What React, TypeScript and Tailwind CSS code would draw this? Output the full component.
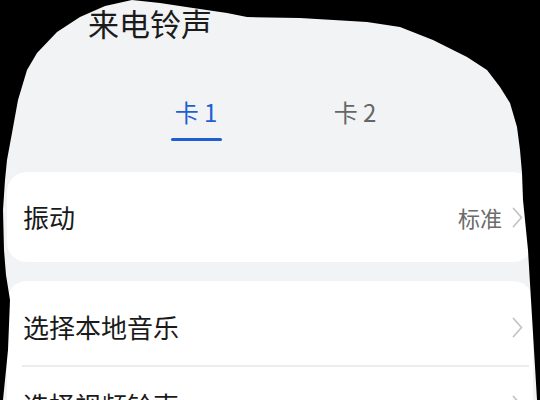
import React from "react";

const font = { fontFamily: '"Noto Sans CJK SC", "Noto Sans", sans-serif' };

function Chevron() {
  return (
    <svg width="11" height="21" viewBox="0 0 11 21" className="shrink-0">
      <polyline
        points="1.5,1.5 9.5,10.5 1.5,19.5"
        fill="none"
        stroke="#c4c4c4"
        strokeWidth="1.8"
        strokeLinecap="round"
        strokeLinejoin="round"
      />
    </svg>
  );
}

// irregular black crop drawn over the screenshot
const inner =
  "M3,400 L8,350 L10,300 L6,275 L4,250 L3,210 L5,180 L7,160 L12,133 L18,100 L27,70 L37,53 L57,32 L80,17 L105,6 L132,0 L160,3 L193,8 L227,13 L247,17 L300,18 L367,22 L400,27 L433,40 L467,57 L487,70 L500,87 L510,103 L517,127 L520,150 L522,173 L523,200 L528,250 L531,300 L534,350 L537,400 Z";

export default function App() {
  return (
    <div
      className="relative w-[540px] h-[400px] overflow-hidden bg-[#f1f3f5]"
      style={font}
    >
      {/* Title */}
      <div className="pt-[3px] pl-[88px] h-[43px] text-[31px] leading-[40px] text-[#1b1b1b]">
        来电铃声
      </div>

      {/* Tabs */}
      <div className="mt-[53px] ml-[136px] flex gap-[39px]">
        <div className="w-[120px] flex flex-col items-center">
          <span className="text-[24px] leading-[32px] text-[#1f5fd1]">卡 1</span>
          <div className="mt-[10px] w-[51px] h-[3px] rounded-full bg-[#1f5fd1]" />
        </div>
        <div className="w-[120px] flex flex-col items-center">
          <span className="text-[24px] leading-[32px] text-[#666666]">卡 2</span>
        </div>
      </div>

      {/* Vibration card */}
      <div className="mt-[31px] mx-[7px] h-[90px] rounded-[20px] bg-white flex items-center pl-[16px] pr-[10px]">
        <span className="flex-1 text-[26px] leading-[34px] text-[#1a1a1a]">振动</span>
        <span className="text-[22px] leading-[30px] text-[#6b6b6b]">标准</span>
        <div className="ml-[10px]">
          <Chevron />
        </div>
      </div>

      {/* Ringtone source card */}
      <div className="mt-[19px] mx-[7px] pt-[8px] rounded-[20px] bg-white">
        <div className="h-[76px] flex items-center pl-[16px] pr-[10px]">
          <span className="flex-1 text-[26px] leading-[34px] text-[#1a1a1a]">选择本地音乐</span>
          <Chevron />
        </div>
        <div className="ml-[15px] mr-[4px] h-[2px] bg-[#ececec]" />
        <div className="h-[76px] flex items-center pl-[16px] pr-[10px]">
          <span className="flex-1 text-[26px] leading-[34px] text-[#1a1a1a]">选择视频铃声</span>
          <Chevron />
        </div>
      </div>

      {/* black crop mask */}
      <svg
        className="absolute inset-0 pointer-events-none"
        width="540"
        height="400"
        viewBox="0 0 540 400"
      >
        <path d={`M0,0 H540 V400 H0 Z ${inner}`} fill="#000" fillRule="evenodd" />
      </svg>
    </div>
  );
}
